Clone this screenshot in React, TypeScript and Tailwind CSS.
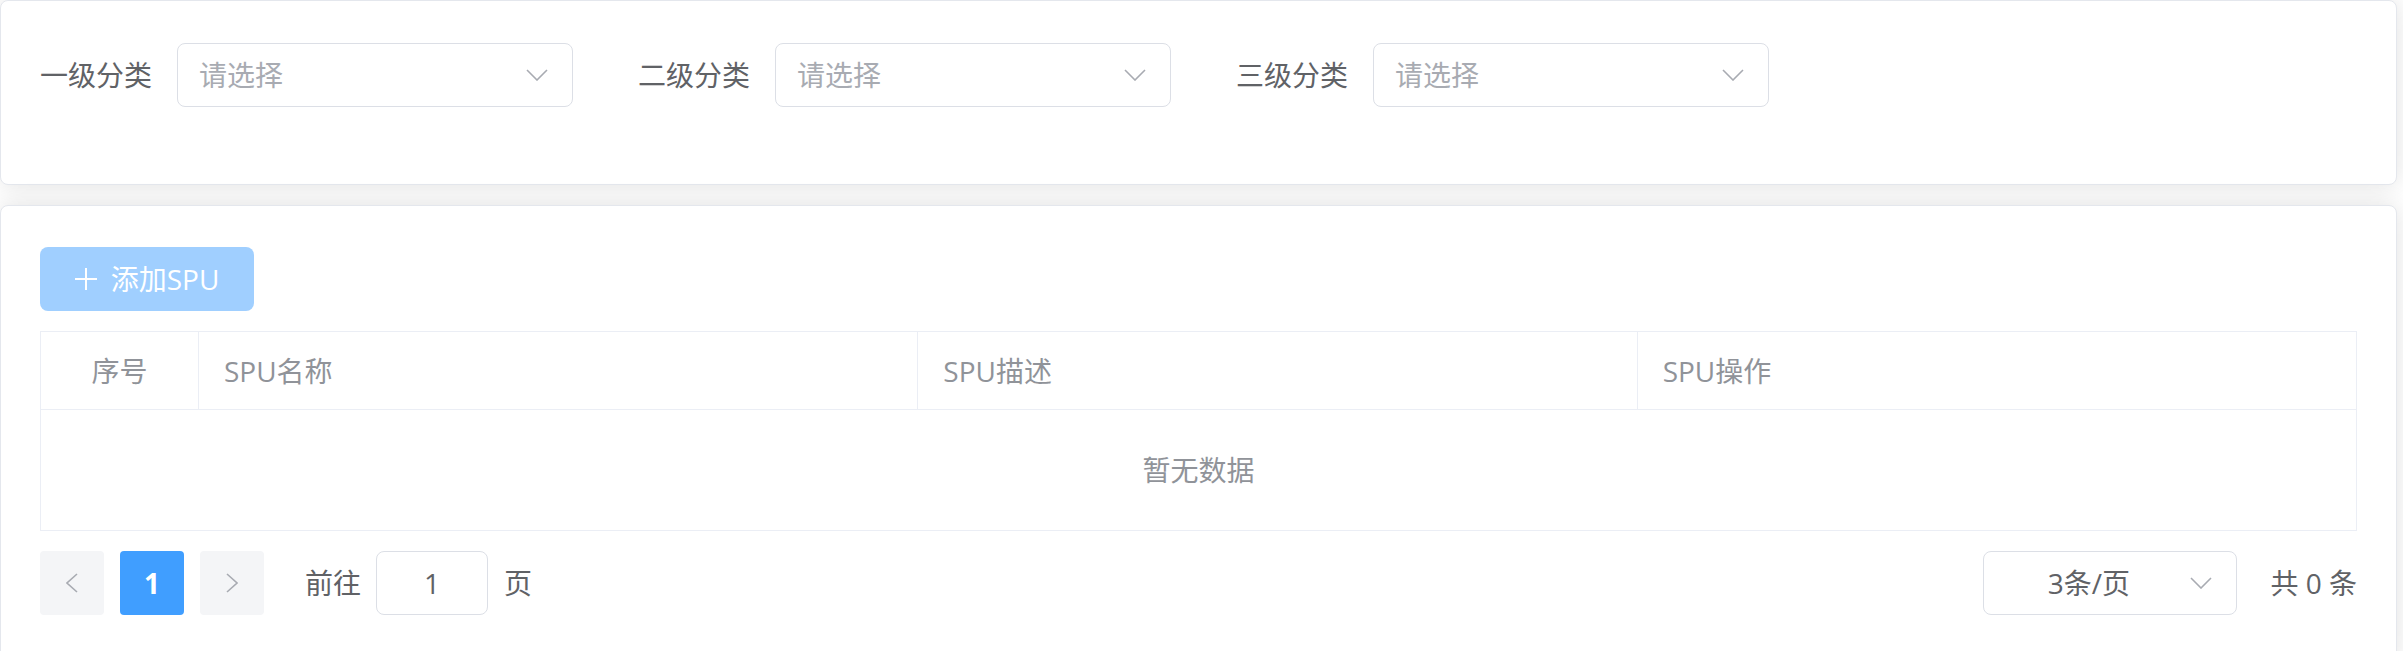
import React from "react";

const font = "font-['Open_Sans','Noto_Sans_CJK_SC',sans-serif]";

function Chevron({ className = "" }: { className?: string }) {
  return (
    <svg className={className} width="22" height="12" viewBox="0 0 22 12" fill="none">
      <polyline points="1,1 11,11 21,1" stroke="#a8abb2" strokeWidth="1.6" />
    </svg>
  );
}

function CategorySelect({ label }: { label: string }) {
  return (
    <div className="flex items-center">
      <span className="mr-[25px] text-[28px] text-[#606266] leading-none">{label}</span>
      <div className="flex h-[64px] w-[396px] items-center rounded-[8px] border border-[#dcdfe6] bg-white pl-[21px] pr-[24px]">
        <span className="flex-1 text-[28px] leading-none text-[#a8abb2]">请选择</span>
        <Chevron />
      </div>
    </div>
  );
}

function PagerButton({ children, active = false }: { children: React.ReactNode; active?: boolean }) {
  return (
    <div
      className={
        active
          ? "flex h-[64px] w-[64px] items-center justify-center rounded-[4px] bg-[#409eff] text-[28px] font-bold text-white"
          : "flex h-[64px] w-[64px] items-center justify-center rounded-[4px] bg-[#f4f5f7]"
      }
    >
      {children}
    </div>
  );
}

export default function App() {
  const columns = ["SPU名称", "SPU描述", "SPU操作"];

  return (
    <div className={`min-h-screen bg-white ${font}`}>
      <div className="w-[2397px]">
        {/* category filters */}
        <div className="rounded-[8px] border border-[#e4e7ed] bg-white pl-[39px] pt-[42px] pb-[77px] shadow-[0_0_24px_rgba(0,0,0,0.12)]">
          <div className="flex gap-[65px]">
            <CategorySelect label="一级分类" />
            <CategorySelect label="二级分类" />
            <CategorySelect label="三级分类" />
          </div>
        </div>

        {/* spu list */}
        <div className="mt-[20px] h-[460px] rounded-[8px] border border-[#e4e7ed] bg-white px-[39px] pt-[41px] shadow-[0_0_24px_rgba(0,0,0,0.12)]">
          <button
            disabled
            className="flex h-[64px] w-[214px] items-center justify-center gap-[14px] rounded-[8px] bg-[#a0cfff] text-[28px] text-white"
          >
            <svg width="22" height="22" viewBox="0 0 22 22" fill="none">
              <path d="M11 0V22M0 11H22" stroke="white" strokeWidth="2" />
            </svg>
            <span className="leading-none">添加SPU</span>
          </button>

          <div className="mt-[20px] border border-[#ebeef5]">
            <div className="flex h-[78px] border-b border-[#ebeef5] text-[28px] text-[#909399]">
              <div className="flex w-[158px] items-center justify-center border-r border-[#ebeef5]">序号</div>
              {columns.map((c, i) => (
                <div
                  key={c}
                  className={
                    i < columns.length - 1
                      ? "flex flex-1 items-center border-r border-[#ebeef5] pl-[25px]"
                      : "flex flex-1 items-center pl-[25px]"
                  }
                >
                  {c}
                </div>
              ))}
            </div>
            <div className="flex h-[120px] items-center justify-center text-[28px] text-[#909399]">暂无数据</div>
          </div>

          <div className="mt-[20px] flex h-[64px] items-center justify-between text-[28px] text-[#606266]">
            <div className="flex items-center">
              <PagerButton>
                <svg width="12" height="20" viewBox="0 0 12 20" fill="none">
                  <polyline points="11,1 1,10 11,19" stroke="#a8abb2" strokeWidth="1.6" />
                </svg>
              </PagerButton>
              <div className="ml-[16px]">
                <PagerButton active>1</PagerButton>
              </div>
              <div className="ml-[16px]">
                <PagerButton>
                  <svg width="12" height="20" viewBox="0 0 12 20" fill="none">
                    <polyline points="1,1 11,10 1,19" stroke="#a8abb2" strokeWidth="1.6" />
                  </svg>
                </PagerButton>
              </div>
              <span className="ml-[41px]">前往</span>
              <div className="ml-[15px] flex h-[64px] w-[112px] items-center justify-center rounded-[8px] border border-[#dcdfe6]">
                1
              </div>
              <span className="ml-[16px]">页</span>
            </div>
            <div className="flex items-center">
              <div className="flex h-[64px] w-[254px] items-center rounded-[8px] border border-[#dcdfe6] pl-[23px] pr-[24px]">
                <span className="flex-1 text-center">3条/页</span>
                <Chevron className="ml-[20px]" />
              </div>
              <span className="ml-[33px] whitespace-pre">共 0 条</span>
            </div>
          </div>
        </div>
      </div>
    </div>
  );
}
